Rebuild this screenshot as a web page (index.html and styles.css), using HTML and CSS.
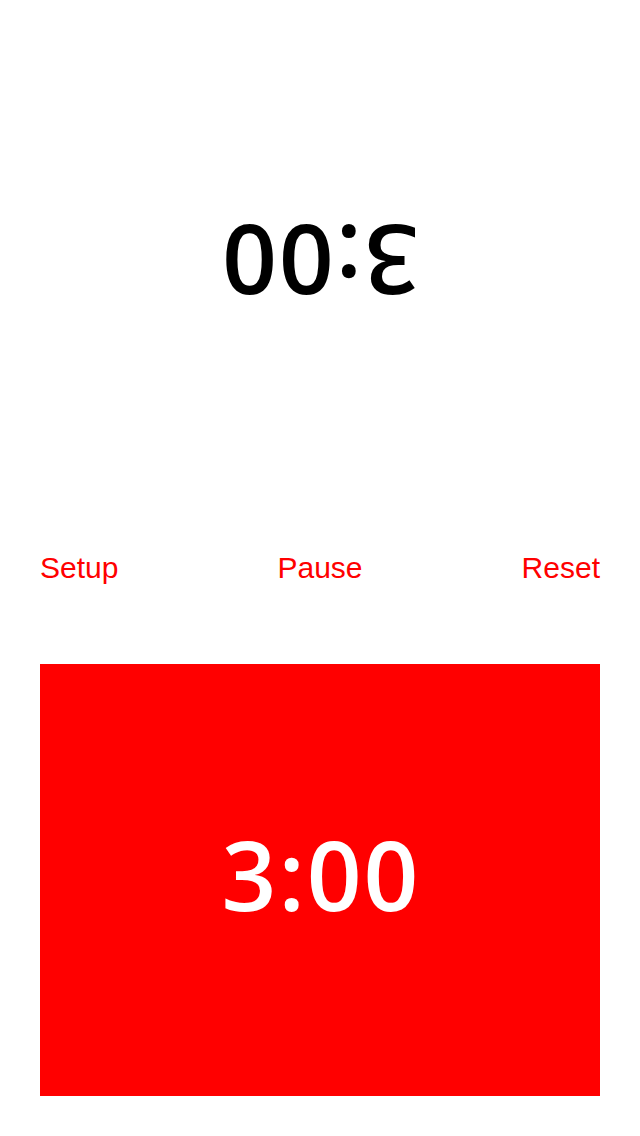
FILE: index.html
```html
<!DOCTYPE html>
<html lang="en">
<head>
<meta charset="utf-8">
<title>Timer</title>
<link rel="stylesheet" href="styles.css">
</head>
<body>
<main class="app">
  <section class="opponent">
    <div class="time time-flipped">3:00</div>
  </section>
  <nav class="controls">
    <span class="control">Setup</span>
    <span class="control">Pause</span>
    <span class="control">Reset</span>
  </nav>
  <section class="player">
    <div class="time time-light">3:00</div>
  </section>
</main>
</body>
</html>
```
FILE: styles.css
```css
html, body {
  margin: 0;
  padding: 0;
  background: #ffffff;
}
body {
  font-family: "Liberation Sans", Arial, sans-serif;
}
.app {
  width: 640px;
  height: 1136px;
  box-sizing: border-box;
  padding: 0 40px 40px;
  display: flex;
  flex-direction: column;
}
.opponent {
  height: 516px;
  box-sizing: border-box;
  padding-top: 8px;
  display: flex;
  align-items: center;
  justify-content: center;
}
.time {
  font-family: "Open Sans", "Liberation Sans", sans-serif;
  font-size: 96px;
  font-weight: 600;
  line-height: 1;
  letter-spacing: 2px;
  padding-left: 2px;
  color: #000000;
}
.time-flipped {
  transform: rotate(180deg);
}
.controls {
  height: 104px;
  display: flex;
  align-items: center;
  justify-content: space-between;
}
.control {
  font-size: 30px;
  line-height: 1;
  color: #ff0000;
}
.player {
  margin-top: 44px;
  height: 432px;
  background: #ff0000;
  display: flex;
  align-items: center;
  justify-content: center;
  padding-bottom: 13px;
  box-sizing: border-box;
}
.time-light {
  color: #ffffff;
}
```
